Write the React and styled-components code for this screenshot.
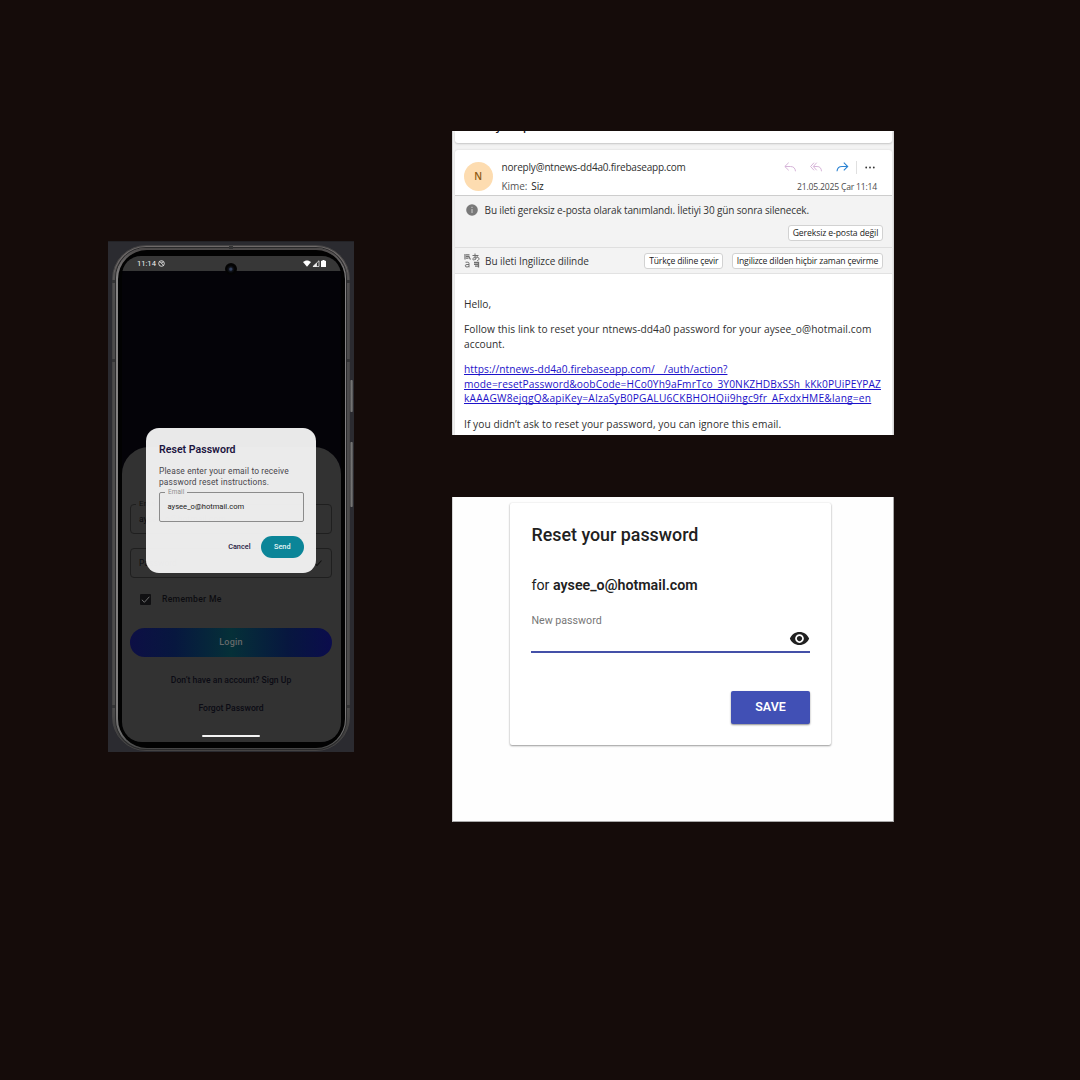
import React from "react";
import styled, { createGlobalStyle } from "styled-components";

const Global = createGlobalStyle`
  * { box-sizing: border-box; }
  html, body { margin: 0; background: #150c0a; }
  button { font: inherit; border: 0; margin: 0; padding: 0; background: none; }
  p, h1, h2 { margin: 0; font-weight: inherit; }
  svg { display: block; flex: none; }
`;

const Page = styled.main`
  width: 1080px;
  height: 1080px;
  display: flex;
  align-items: flex-start;
  gap: 97.6px;
  padding: 131px 186px 0 108px;
  background: #150c0a;
  overflow: hidden;
`;

const Line = styled.span`
  display: block;
  white-space: nowrap;
  letter-spacing: ${(p) => p.$ls || 0}px;
`;

/* ---------- Phone ---------- */

const Emulator = styled.section`
  position: relative;
  width: 246px;
  height: 511px;
  margin-top: 110px;
  padding: 3px 4px 1px 4px;
  background: #2b2b30;
  border-top: 1px solid #232327;
  font-family: Roboto, "Liberation Sans", sans-serif;
  flex: none;
`;

const Chassis = styled.div`
  height: 100%;
  padding: 2px 3px 1px;
  border: 1px solid #454444;
  border-radius: 34px;
  background: linear-gradient(#5a5757, #4c4b4b 12%, #4c4b4b 92%, #3a3a3a 99%);
  box-shadow: inset 0 2px 0 #6e6969;
`;

const Rim = styled.div`
  height: 100%;
  padding: 2px 1.5px 1px;
  border-radius: 30px;
  background: linear-gradient(#4a4747, #868484 6%, #7d7b7b 92%, #6a6a6a 97%, #444 100%);
  box-shadow: 0 0 0 1px #2a2a2b;
`;

const Bezel = styled.div`
  height: 100%;
  padding: 6px 4px 6px 4.5px;
  border-radius: 29px;
  background: #020202;
`;

const Screen = styled.div`
  position: relative;
  height: 100%;
  display: flex;
  flex-direction: column;
  border-radius: 19px 19px 20px 20px;
  background: #040308;
  overflow: hidden;
`;

const StatusBar = styled.div`
  height: 15px;
  flex: none;
  display: flex;
  align-items: center;
  padding: 0 15px 0 15px;
  background: #373737;
  color: #f2f2f2;
  font-size: 7.6px;
  gap: 2.500px;
`;

const StatusIcons = styled.div`
  margin-left: auto;
  display: flex;
  align-items: center;
  gap: 1px;
`;

const Camera = styled.div`
  position: absolute;
  left: 103px;
  top: 6.5px;
  width: 12px;
  height: 12px;
  border-radius: 50%;
  background: radial-gradient(circle at 48% 52%, #33415f 0 1px, #10131b 2.2px, #030303 4px);
`;

const SideKey = styled.div`
  position: absolute;
  right: 1px;
  top: ${(p) => p.$top}px;
  width: 3px;
  height: ${(p) => p.$h}px;
  border-radius: 1px;
  background: linear-gradient(90deg, #444, #7c7c7c 60%, #444);
`;

const Antenna = styled.div`
  position: absolute;
  left: ${(p) => p.$x}px;
  top: ${(p) => p.$y}px;
  width: ${(p) => p.$w || 3}px;
  height: ${(p) => p.$h || 3}px;
  background: #343435;
`;

const Sheet = styled.div`
  flex: 1;
  margin-top: 176px;
  padding: 57px 8.5px 0 8px;
  border-radius: 27px 27px 0 0;
  background: #323232;
  display: flex;
  flex-direction: column;
  align-items: stretch;
  color: #0c0c10;
  font-size: 8.6px;
`;

const DimField = styled.div`
  position: relative;
  height: 30px;
  margin-bottom: 14px;
  padding: 0 8px;
  border: 1px solid #1f1f1f;
  border-radius: 4px;
  display: flex;
  align-items: center;
  justify-content: space-between;
`;

const FloatLabel = styled.span`
  position: absolute;
  left: ${(p) => p.$left}px;
  top: -6px;
  padding: 0 3px;
  line-height: 10px;
  font-size: ${(p) => p.$size}px;
  letter-spacing: 0.1px;
  color: ${(p) => p.$color};
  background: ${(p) => p.$bg};
`;

const RememberRow = styled.div`
  display: flex;
  align-items: center;
  height: 11px;
  margin-top: 2px;
  padding-left: 10px;
  gap: 11px;
  font-weight: 500;
  > span { line-height: 10px; margin-top: -1px; }
`;

const Checkbox = styled.div`
  width: 11px;
  height: 11px;
  border-radius: 1px;
  background: #101012;
`;

const LoginButton = styled.button`
  height: 28.5px;
  margin-top: 23px;
  padding-bottom: 1px;
  border-radius: 15px;
  background: linear-gradient(90deg, #0d0f45, #07173f 22%, #053038 50%, #07173f 78%, #0b0c4c);
  color: #66696b;
  font-weight: 500;
  font-size: 9px;
  display: flex;
  align-items: center;
  justify-content: center;
`;

const SheetLink = styled.a`
  display: flex;
  justify-content: center;
  height: 12px;
  line-height: 12px;
  margin-top: ${(p) => p.$mt}px;
  color: #0b0b14;
  font-weight: 500;
`;

const HomeBar = styled.div`
  width: 58px;
  height: 2px;
  margin: 21px auto 0;
  border-radius: 1px;
  background: #f4f4f4;
`;

const Dialog = styled.div`
  position: absolute;
  left: 24px;
  top: 172px;
  width: 170px;
  height: 144.5px;
  padding: 14.5px 12.5px 0 13px;
  border-radius: 13px;
  background: rgba(247, 247, 247, 0.945);
  display: flex;
  flex-direction: column;
`;

const DialogTitle = styled.h2`
  font-size: 10.6px;
  line-height: 14px;
  font-weight: 600;
  color: #1c1540;
`;

const DialogText = styled.p`
  margin-top: 9px;
  font-size: 8.4px;
  line-height: 11px;
  color: #48464c;
`;

const DialogField = styled.div`
  position: relative;
  height: 30px;
  margin-top: 4.5px;
  padding: 0 7.5px 1px;
  border: 1px solid #8b8b8b;
  border-radius: 2px;
  display: flex;
  align-items: center;
  font-size: 7.6px;
  color: #222;
`;

const DialogActions = styled.div`
  display: flex;
  justify-content: flex-end;
  align-items: center;
  gap: 10.5px;
  margin-top: 14px;
  font-size: 7.3px;
  font-weight: 500;
  color: #1e1842;
`;

const SendButton = styled.button`
  width: 42.5px;
  height: 21.5px;
  border-radius: 11px;
  background: #0b8598;
  color: #e3f4f5;
  font-weight: 500;
`;

/* ---------- Right column ---------- */

const Column = styled.div`
  display: flex;
  flex-direction: column;
  gap: 62px;
  width: 442.4px;
  flex: none;
`;

const MailPanel = styled.section`
  height: 304px;
  display: flex;
  flex-direction: column;
  padding: 0 1px 0 3px;
  background: #f3f3f3;
  border-right: 1px solid #d8d8d8;
  box-shadow: inset 1px 0 0 #d4d4d4;
  overflow: hidden;
  font-family: "Open Sans", "Noto Sans", sans-serif;
  color: #2f2f2f;
`;

const SubjectStrip = styled.div`
  height: 12px;
  flex: none;
  padding-left: 9px;
  background: #fff;
  border-radius: 0 0 3px 3px;
  box-shadow: 0 1px 2px #c4c4c4;
  overflow: hidden;
  font-size: 11px;
  font-weight: 600;
  line-height: 16px;
  color: #111;

  > * { margin-top: -13px; }
`;

const MailCard = styled.div`
  flex: 1;
  margin-top: 7px;
  border-radius: 3px 3px 0 0;
  background: #fff;
  box-shadow: 0 0 2px #cfcfcf;
`;

const MailHeader = styled.header`
  display: flex;
  height: 45px;
  padding: 9px 15px 0 9px;
  gap: 9px;
`;

const Avatar = styled.div`
  width: 29px;
  height: 29px;
  margin-top: 3px;
  border-radius: 50%;
  background: #fddcb0;
  color: #8f5a10;
  font-size: 10px;
  font-weight: 600;
  line-height: 12px;
  padding-bottom: 1px;
  display: flex;
  align-items: center;
  justify-content: center;
`;

const Stack = styled.div`
  display: flex;
  flex-direction: column;
  flex: 1;
  font-size: 10px;
  line-height: 16px;
  gap: 3px;
`;

const Recipients = styled.div`
  display: flex;
  gap: 4px;
  color: #555;
  letter-spacing: -0.1px;
  b { font-weight: 400; color: #222; }
`;

const HeaderSide = styled.div`
  display: flex;
  flex-direction: column;
  align-items: flex-end;
  gap: 4px;
  font-size: 8.6px;
  line-height: 16px;
  color: #4a4a4a;
`;

const IconRow = styled.div`
  display: flex;
  align-items: center;
  height: 16px;
  padding-right: 2px;
`;

const Gap = styled.i`
  width: 14px;
`;

const Divider = styled.i`
  width: 1px;
  height: 13px;
  margin: 0 8px 0 7px;
  background: #e0e0e0;
`;

const JunkBanner = styled.div`
  height: 52px;
  padding: 7.5px 9px 0 11px;
  border-top: 1px solid #cdcdcd;
  background: #f3f3f3;
  display: flex;
  flex-direction: column;
  justify-content: flex-start;
  font-size: 10px;
  color: #333;
`;

const BannerLine = styled.div`
  display: flex;
  align-items: center;
  gap: 7px;
  height: 14px;
  > span { line-height: 14px; margin-top: -1px; }
  > svg { margin-top: -1px; }
`;

const BannerActions = styled.div`
  display: flex;
  justify-content: flex-end;
  margin-top: 7.5px;
`;

const TranslateBar = styled.div`
  height: 27px;
  padding: 0 9px 0 9px;
  border-top: 1px solid #dfdfdf;
  border-bottom: 1px solid #e2e2e2;
  background: #f3f3f3;
  display: flex;
  align-items: center;
  gap: 5.5px;
  font-size: 10px;
  color: #333;
`;

const SmallButton = styled.button`
  width: ${(p) => p.$w}px;
  height: 16px;
  margin-left: ${(p) => p.$ml || 0};
  border: 1px solid #d2d2d2;
  border-radius: 3px;
  background: #fff;
  font-size: 8.6px;
  line-height: 14px;
  color: #222;
  display: flex;
  justify-content: center;
`;

const MailBody = styled.div`
  padding: 22.5px 8px 0 9.4px;
  display: flex;
  flex-direction: column;
  gap: 11px;
  font-size: 10.2px;
  line-height: 14.5px;
`;

const MailLink = styled.a`
  color: #1d12c9;
  text-decoration: underline;
  text-underline-offset: 1px;
  text-decoration-skip-ink: none;
`;

const ResetPanel = styled.section`
  height: 325px;
  padding: 6px 0 0 57.4px;
  background: #fefefe;
  border-left: 1px solid #d6d6d6;
  border-right: 1px solid #a9a9a9;
  border-bottom: 1px solid #a9a9a9;
  font-family: Roboto, "Liberation Sans", sans-serif;
  color: #212121;
`;

const ResetCard = styled.div`
  width: 321px;
  height: 242px;
  padding: 21px 21px 0 21.5px;
  background: #fff;
  border-radius: 2px;
  box-shadow: 0 1px 2px rgba(0, 0, 0, 0.38), 0 0 2px rgba(0, 0, 0, 0.1);
  display: flex;
  flex-direction: column;
`;

const ResetTitle = styled.h1`
  font-size: 17.85px;
  line-height: 22px;
  font-weight: 500;
`;

const ForEmail = styled.p`
  margin-top: 30px;
  font-size: 14.25px;
  line-height: 18px;
  b { font-weight: 600; }
`;

const PasswordField = styled.label`
  height: 38.5px;
  margin-top: 20px;
  border-bottom: 2px solid #4450a8;
  display: flex;
  justify-content: space-between;
  font-size: 10.65px;
  line-height: 13px;
  color: #777;
  svg { margin: 13.5px 0 0; }
`;

const SaveButton = styled.button`
  width: 79px;
  height: 32.5px;
  margin-top: 38.5px;
  padding-bottom: 1px;
  align-self: flex-end;
  border-radius: 2px;
  background: #4150b5;
  box-shadow: 0 1px 2px rgba(0, 0, 0, 0.45);
  color: #fff;
  font-size: 12.4px;
  font-weight: 600;
`;

/* ---------- Icons ---------- */

const DndIcon = () => (
  <svg width="7" height="7" viewBox="0 0 14 14" fill="none" stroke="#e8e8e8" strokeWidth="1.8">
    <circle cx="7" cy="7" r="5.6" />
    <path d="M2.5 2.5l9 9M6 4.5h4L8.5 7" strokeWidth="1.4" />
  </svg>
);
const WifiIcon = () => (
  <svg width="8" height="7" viewBox="0 0 16 14" fill="#fff">
    <path d="M0 4.200C4.600-.400 11.400-.400 16 4.200L8 13.500z" />
  </svg>
);
const SignalIcon = () => (
  <svg width="8" height="7" viewBox="0 0 16 14" fill="none" stroke="#f4f4f4" strokeWidth="1.5">
    <path d="M14 1.5V13H2z" />
    <path d="M9 6.5V13H2.5z" fill="#f4f4f4" />
  </svg>
);
const BatteryIcon = () => (
  <svg width="5" height="7" viewBox="0 0 10 14" fill="#fff">
    <path d="M3 0h4v1.5h2q1 0 1 1V13q0 1-1 1H1q-1 0-1-1V2.5q0-1 1-1h2z" />
  </svg>
);
const TickIcon = ({ size, color, width }) => (
  <svg width={size} height={size} viewBox="0 0 12 12" fill="none" stroke={color} strokeWidth={width}>
    <path d="M2 6.3L4.8 9L10.2 3" />
  </svg>
);
const ReplyIcon = () => (
  <svg width="12" height="10" viewBox="0 0 12 10" fill="none" stroke="#d6b4d8" strokeWidth="1">
    <path d="M4.7.7L.8 4.5l3.9 3.8M1 4.5h5.5c3 0 4.7 1.6 5 4.8" />
  </svg>
);
const ReplyAllIcon = () => (
  <svg width="12" height="10" viewBox="0 0 12 10" fill="none" stroke="#d6b4d8" strokeWidth="1">
    <path d="M4 .7L.6 4.5L4 8.3M6.7.7L3.3 4.5l3.4 3.8M3.5 4.5h3.6c2.7 0 4.2 1.6 4.4 4.8" />
  </svg>
);
const ForwardIcon = () => (
  <svg width="13" height="10" viewBox="0 0 12 10" fill="none" stroke="#2b83d3" strokeWidth="1.1">
    <path d="M7.3.7l3.9 3.8l-3.9 3.8M11 4.5H5.5c-3 0-4.7 1.6-5 4.8" />
  </svg>
);
const MoreIcon = () => (
  <svg width="10" height="3" viewBox="0 0 10 3" fill="#333">
    <circle cx="1.2" cy="1.5" r=".9" />
    <circle cx="5" cy="1.5" r=".9" />
    <circle cx="8.8" cy="1.5" r=".9" />
  </svg>
);
const InfoIcon = () => (
  <svg width="12" height="12" viewBox="0 0 12 12">
    <circle cx="6" cy="6" r="5.8" fill="#797979" />
    <path d="M6 5v4M6 2.8v1.2" stroke="#cfcfcf" strokeWidth="1" />
  </svg>
);
const TranslateIcon = () => (
  <svg width="16" height="15" viewBox="0 0 16 15" fill="none" stroke="#6f6f6f" strokeWidth="1">
    <path d="M1 1v5.5M2 1.8h3.500M2 3.5h3.500M2 5.200h2.500M5 4l1.500 2.500" strokeWidth="1.2" />
    <path d="M8.5 2.500h6M11 .5c0 3 0 4.500.5 6M13.500 3.500c-.7 2.500-4.500 4.500-4.800 2.700-.3-1.900 6.300-3.400 6.300-.4 0 1.200-1 1.700-2 1.900" />
    <path d="M1.500 9.200h2.300q1.200 0 1.200 1.200v4M5 11.500H3q-1.700 0-1.700 1.300T3 14q1.500 0 2-1" />
    <path d="M10 9.500h4.500v5M10 11.300h4M11 13.200h3" strokeWidth="1.3" />
  </svg>
);
const EyeIcon = () => (
  <svg width="21" height="21" viewBox="0 0 24 24" fill="#212121">
    <path d="M12 4.500C7 4.500 2.730 7.610 1 12c1.730 4.390 6 7.500 11 7.500s9.270-3.110 11-7.500c-1.730-4.390-6-7.500-11-7.500zM12 17c-2.760 0-5-2.240-5-5s2.240-5 5-5 5 2.240 5 5-2.240 5-5 5zm0-8c-1.660 0-3 1.340-3 3s1.340 3 3 3 3-1.340 3-3-1.340-3-3-3z" />
  </svg>
);

/* ---------- Sections ---------- */

const Phone = () => (
  <Emulator>
    <Chassis>
      <Rim>
        <Bezel>
          <Screen>
            <StatusBar>
              <Line>11:14</Line>
              <DndIcon />
              <StatusIcons>
                <WifiIcon />
                <SignalIcon />
                <BatteryIcon />
              </StatusIcons>
            </StatusBar>
            <Sheet>
              <DimField>
                <FloatLabel $left={5} $size={8} $color="#111" $bg="#323232">Email</FloatLabel>
                <Line>aysee_o@hotmail.com</Line>
              </DimField>
              <DimField>
                <Line>Password</Line>
                <TickIcon size={10} color="#111" width={1.3} />
              </DimField>
              <RememberRow>
                <Checkbox>
                  <TickIcon size={11} color="#777" width={1} />
                </Checkbox>
                <Line $ls={0.3}>Remember Me</Line>
              </RememberRow>
              <LoginButton><Line $ls={0.2}>Login</Line></LoginButton>
              <SheetLink $mt={17.5}><Line>Don’t have an account? Sign Up</Line></SheetLink>
              <SheetLink $mt={16}><Line>Forgot Password</Line></SheetLink>
              <HomeBar />
            </Sheet>
            <Camera />
            <Dialog>
              <DialogTitle><Line>Reset Password</Line></DialogTitle>
              <DialogText>
                <Line $ls={0.14}>Please enter your email to receive</Line>
                <Line $ls={0.16}>password reset instructions.</Line>
              </DialogText>
              <DialogField>
                <FloatLabel $left={5} $size={6.4} $color="#8d8d8d" $bg="#ebebeb">Email</FloatLabel>
                <Line>aysee_o@hotmail.com</Line>
              </DialogField>
              <DialogActions>
                <Line>Cancel</Line>
                <SendButton>Send</SendButton>
              </DialogActions>
            </Dialog>
          </Screen>
        </Bezel>
      </Rim>
    </Chassis>
    <SideKey $top={138} $h={32} />
    <SideKey $top={200} $h={65} />
    <Antenna $x={121} $y={4} $w={4} />
    <Antenna $x={4} $y={38} />
    <Antenna $x={239} $y={38} />
    <Antenna $x={4} $y={117} />
    <Antenna $x={239} $y={117} />
    <Antenna $x={4} $y={463} />
    <Antenna $x={239} $y={463} />
  </Emulator>
);

const Mail = () => (
  <MailPanel>
    <SubjectStrip><Line>Reset your password for</Line></SubjectStrip>
    <MailCard>
      <MailHeader>
        <Avatar>N</Avatar>
        <Stack>
          <Line $ls={-0.21}>noreply@ntnews-dd4a0.firebaseapp.com</Line>
          <Recipients><span>Kime:</span><b>Siz</b></Recipients>
        </Stack>
        <HeaderSide>
          <IconRow>
            <ReplyIcon />
            <Gap /><ReplyAllIcon />
            <Gap /><ForwardIcon />
            <Divider />
            <MoreIcon />
          </IconRow>
          <Line $ls={-0.2}>21.05.2025 Çar 11:14</Line>
        </HeaderSide>
      </MailHeader>
      <JunkBanner>
        <BannerLine>
          <InfoIcon />
          <Line $ls={-0.145}>Bu ileti gereksiz e-posta olarak tanımlandı. İletiyi 30 gün sonra silenecek.</Line>
        </BannerLine>
        <BannerActions>
          <SmallButton $w={95}><Line $ls={-0.1}>Gereksiz e-posta değil</Line></SmallButton>
        </BannerActions>
      </JunkBanner>
      <TranslateBar>
        <TranslateIcon />
        <Line $ls={-0.08}>Bu ileti Ingilizce dilinde</Line>
        <SmallButton $w={78.5} $ml="auto"><Line $ls={-0.16}>Türkçe diline çevir</Line></SmallButton>
        <SmallButton $w={151} $ml="3.5px"><Line $ls={-0.14}>Ingilizce dilden hiçbir zaman çevirme</Line></SmallButton>
      </TranslateBar>
      <MailBody>
        <p><Line>Hello,</Line></p>
        <p>
          <Line $ls={0.07}>Follow this link to reset your ntnews-dd4a0 password for your aysee_o@hotmail.com</Line>
          <Line $ls={0.05}>account.</Line>
        </p>
        <MailLink>
          <Line $ls={0.065}>https://ntnews-dd4a0.firebaseapp.com/__/auth/action?</Line>
          <Line $ls={0.11}>mode=resetPassword&amp;oobCode=HCo0Yh9aFmrTco_3Y0NKZHDBxSSh_kKk0PUiPEYPAZ</Line>
          <Line $ls={0.21}>kAAAGW8ejqgQ&amp;apiKey=AIzaSyB0PGALU6CKBHOHQii9hgc9fr_AFxdxHME&amp;lang=en</Line>
        </MailLink>
        <p><Line $ls={0.065}>If you didn’t ask to reset your password, you can ignore this email.</Line></p>
      </MailBody>
    </MailCard>
  </MailPanel>
);

const Reset = () => (
  <ResetPanel>
    <ResetCard>
      <ResetTitle><Line>Reset your password</Line></ResetTitle>
      <ForEmail><Line>for <b>aysee_o@hotmail.com</b></Line></ForEmail>
      <PasswordField>
        <Line>New password</Line>
        <EyeIcon />
      </PasswordField>
      <SaveButton>SAVE</SaveButton>
    </ResetCard>
  </ResetPanel>
);

export default function App() {
  return (
    <>
      <Global />
      <Page>
        <Phone />
        <Column>
          <Mail />
          <Reset />
        </Column>
      </Page>
    </>
  );
}
